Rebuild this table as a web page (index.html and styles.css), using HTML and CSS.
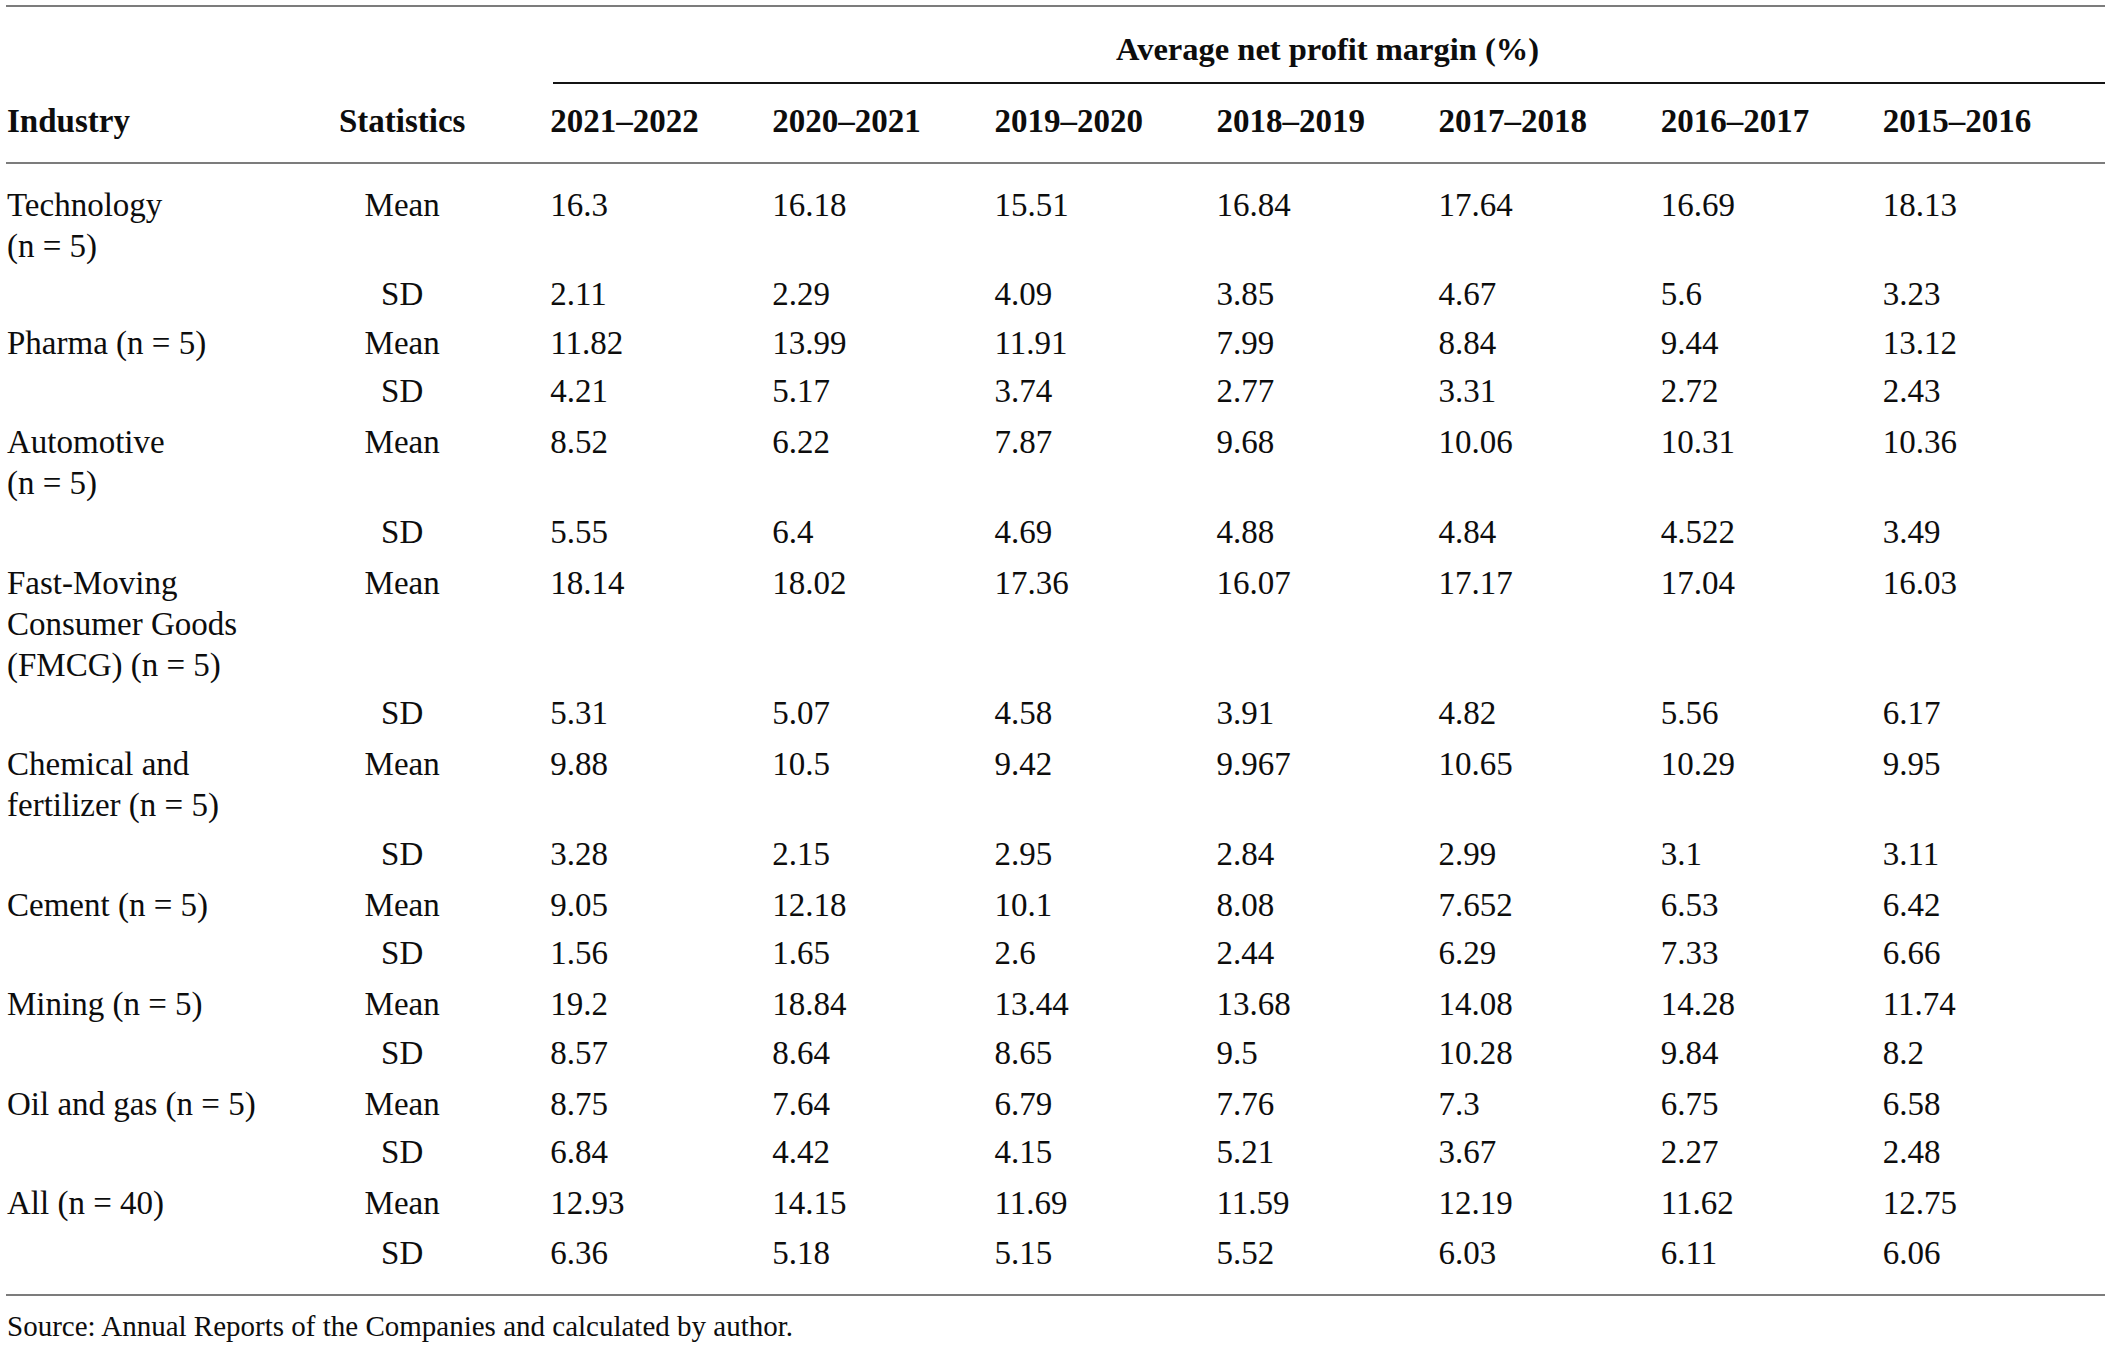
FILE: index.html
```html
<!DOCTYPE html>
<html lang="en">
<head>
<meta charset="utf-8">
<title>Average net profit margin</title>
<link rel="stylesheet" href="styles.css">
</head>
<body>
<div class="page">
  <table class="data">
    <colgroup>
      <col class="c-ind">
      <col class="c-stat">
      <col class="c-year"><col class="c-year"><col class="c-year"><col class="c-year"><col class="c-year"><col class="c-year"><col class="c-year">
    </colgroup>
    <thead>
      <tr class="h1">
        <th></th>
        <th></th>
        <th colspan="7" class="group"><div class="group-in">Average net profit margin (%)</div></th>
      </tr>
      <tr class="h2">
        <th class="ind">Industry</th>
        <th class="stat">Statistics</th>
        <th>2021–2022</th>
        <th>2020–2021</th>
        <th>2019–2020</th>
        <th>2018–2019</th>
        <th>2017–2018</th>
        <th>2016–2017</th>
        <th>2015–2016</th>
      </tr>
    </thead>
    <tbody>
      <tr class="mean first">
        <td class="ind">Technology<br>(n = 5)</td><td class="stat">Mean</td>
        <td>16.3</td><td>16.18</td><td>15.51</td><td>16.84</td><td>17.64</td><td>16.69</td><td>18.13</td>
      </tr>
      <tr class="sd first-sd">
        <td class="ind"></td><td class="stat">SD</td>
        <td>2.11</td><td>2.29</td><td>4.09</td><td>3.85</td><td>4.67</td><td>5.6</td><td>3.23</td>
      </tr>
      <tr class="mean">
        <td class="ind">Pharma (n = 5)</td><td class="stat">Mean</td>
        <td>11.82</td><td>13.99</td><td>11.91</td><td>7.99</td><td>8.84</td><td>9.44</td><td>13.12</td>
      </tr>
      <tr class="sd">
        <td class="ind"></td><td class="stat">SD</td>
        <td>4.21</td><td>5.17</td><td>3.74</td><td>2.77</td><td>3.31</td><td>2.72</td><td>2.43</td>
      </tr>
      <tr class="mean">
        <td class="ind">Automotive<br>(n = 5)</td><td class="stat">Mean</td>
        <td>8.52</td><td>6.22</td><td>7.87</td><td>9.68</td><td>10.06</td><td>10.31</td><td>10.36</td>
      </tr>
      <tr class="sd">
        <td class="ind"></td><td class="stat">SD</td>
        <td>5.55</td><td>6.4</td><td>4.69</td><td>4.88</td><td>4.84</td><td>4.522</td><td>3.49</td>
      </tr>
      <tr class="mean">
        <td class="ind">Fast-Moving<br>Consumer Goods<br>(FMCG) (n = 5)</td><td class="stat">Mean</td>
        <td>18.14</td><td>18.02</td><td>17.36</td><td>16.07</td><td>17.17</td><td>17.04</td><td>16.03</td>
      </tr>
      <tr class="sd">
        <td class="ind"></td><td class="stat">SD</td>
        <td>5.31</td><td>5.07</td><td>4.58</td><td>3.91</td><td>4.82</td><td>5.56</td><td>6.17</td>
      </tr>
      <tr class="mean">
        <td class="ind">Chemical and<br>fertilizer (n = 5)</td><td class="stat">Mean</td>
        <td>9.88</td><td>10.5</td><td>9.42</td><td>9.967</td><td>10.65</td><td>10.29</td><td>9.95</td>
      </tr>
      <tr class="sd">
        <td class="ind"></td><td class="stat">SD</td>
        <td>3.28</td><td>2.15</td><td>2.95</td><td>2.84</td><td>2.99</td><td>3.1</td><td>3.11</td>
      </tr>
      <tr class="mean">
        <td class="ind">Cement (n = 5)</td><td class="stat">Mean</td>
        <td>9.05</td><td>12.18</td><td>10.1</td><td>8.08</td><td>7.652</td><td>6.53</td><td>6.42</td>
      </tr>
      <tr class="sd">
        <td class="ind"></td><td class="stat">SD</td>
        <td>1.56</td><td>1.65</td><td>2.6</td><td>2.44</td><td>6.29</td><td>7.33</td><td>6.66</td>
      </tr>
      <tr class="mean">
        <td class="ind">Mining (n = 5)</td><td class="stat">Mean</td>
        <td>19.2</td><td>18.84</td><td>13.44</td><td>13.68</td><td>14.08</td><td>14.28</td><td>11.74</td>
      </tr>
      <tr class="sd">
        <td class="ind"></td><td class="stat">SD</td>
        <td>8.57</td><td>8.64</td><td>8.65</td><td>9.5</td><td>10.28</td><td>9.84</td><td>8.2</td>
      </tr>
      <tr class="mean">
        <td class="ind">Oil and gas (n = 5)</td><td class="stat">Mean</td>
        <td>8.75</td><td>7.64</td><td>6.79</td><td>7.76</td><td>7.3</td><td>6.75</td><td>6.58</td>
      </tr>
      <tr class="sd">
        <td class="ind"></td><td class="stat">SD</td>
        <td>6.84</td><td>4.42</td><td>4.15</td><td>5.21</td><td>3.67</td><td>2.27</td><td>2.48</td>
      </tr>
      <tr class="mean">
        <td class="ind">All (n = 40)</td><td class="stat">Mean</td>
        <td>12.93</td><td>14.15</td><td>11.69</td><td>11.59</td><td>12.19</td><td>11.62</td><td>12.75</td>
      </tr>
      <tr class="sd last">
        <td class="ind"></td><td class="stat">SD</td>
        <td>6.36</td><td>5.18</td><td>5.15</td><td>5.52</td><td>6.03</td><td>6.11</td><td>6.06</td>
      </tr>
    </tbody>
  </table>
  <p class="source">Source: Annual Reports of the Companies and calculated by author.</p>
</div>
</body>
</html>
```

FILE: styles.css
```css
html, body {
  margin: 0;
  padding: 0;
  background: #ffffff;
}

.page {
  padding: 5px 0 0 6px;
  font-family: "Liberation Serif", "Times New Roman", serif;
  color: #0d0d0d;
}

.data {
  width: 2099px;
  table-layout: fixed;
  border-collapse: collapse;
  font-size: 33px;
  line-height: 41px;
  border-top: 2px solid #7c7c7c;
  border-bottom: 2px solid #7c7c7c;
}

.c-ind { width: 248px; }
.c-stat { width: 296px; }
.c-year { width: 222px; }

.data th,
.data td {
  padding: 0;
  text-align: left;
  vertical-align: top;
  white-space: nowrap;
}

.data th {
  font-weight: bold;
}

.h1 th {
  padding-top: 22px;
}

.h1 th.group {
  padding-left: 3px;
}

.group-in {
  text-align: center;
  font-size: 32.5px;
  padding-bottom: 12px;
  padding-right: 3px;
  border-bottom: 2px solid #141414;
}

.h2 th {
  padding-top: 17px;
  padding-bottom: 20px;
  border-bottom: 2px solid #7c7c7c;
}

.ind {
  padding-left: 1px !important;
}

.stat {
  text-align: center !important;
}

.mean td {
  padding-top: 6px;
  padding-bottom: 3px;
}

.sd td {
  padding-top: 4px;
  padding-bottom: 4px;
}

.mean + .sd td {
  padding-top: 4.5px;
}

.mean.first td {
  padding-top: 21px;
}

.sd.first-sd td {
  padding-top: 3.5px;
  padding-bottom: 2px;
}

.sd.last td {
  padding-top: 5.5px;
  padding-bottom: 20.5px;
}

.source {
  margin: 12px 0 0 1px;
  font-size: 29px;
  line-height: 36px;
}
```
